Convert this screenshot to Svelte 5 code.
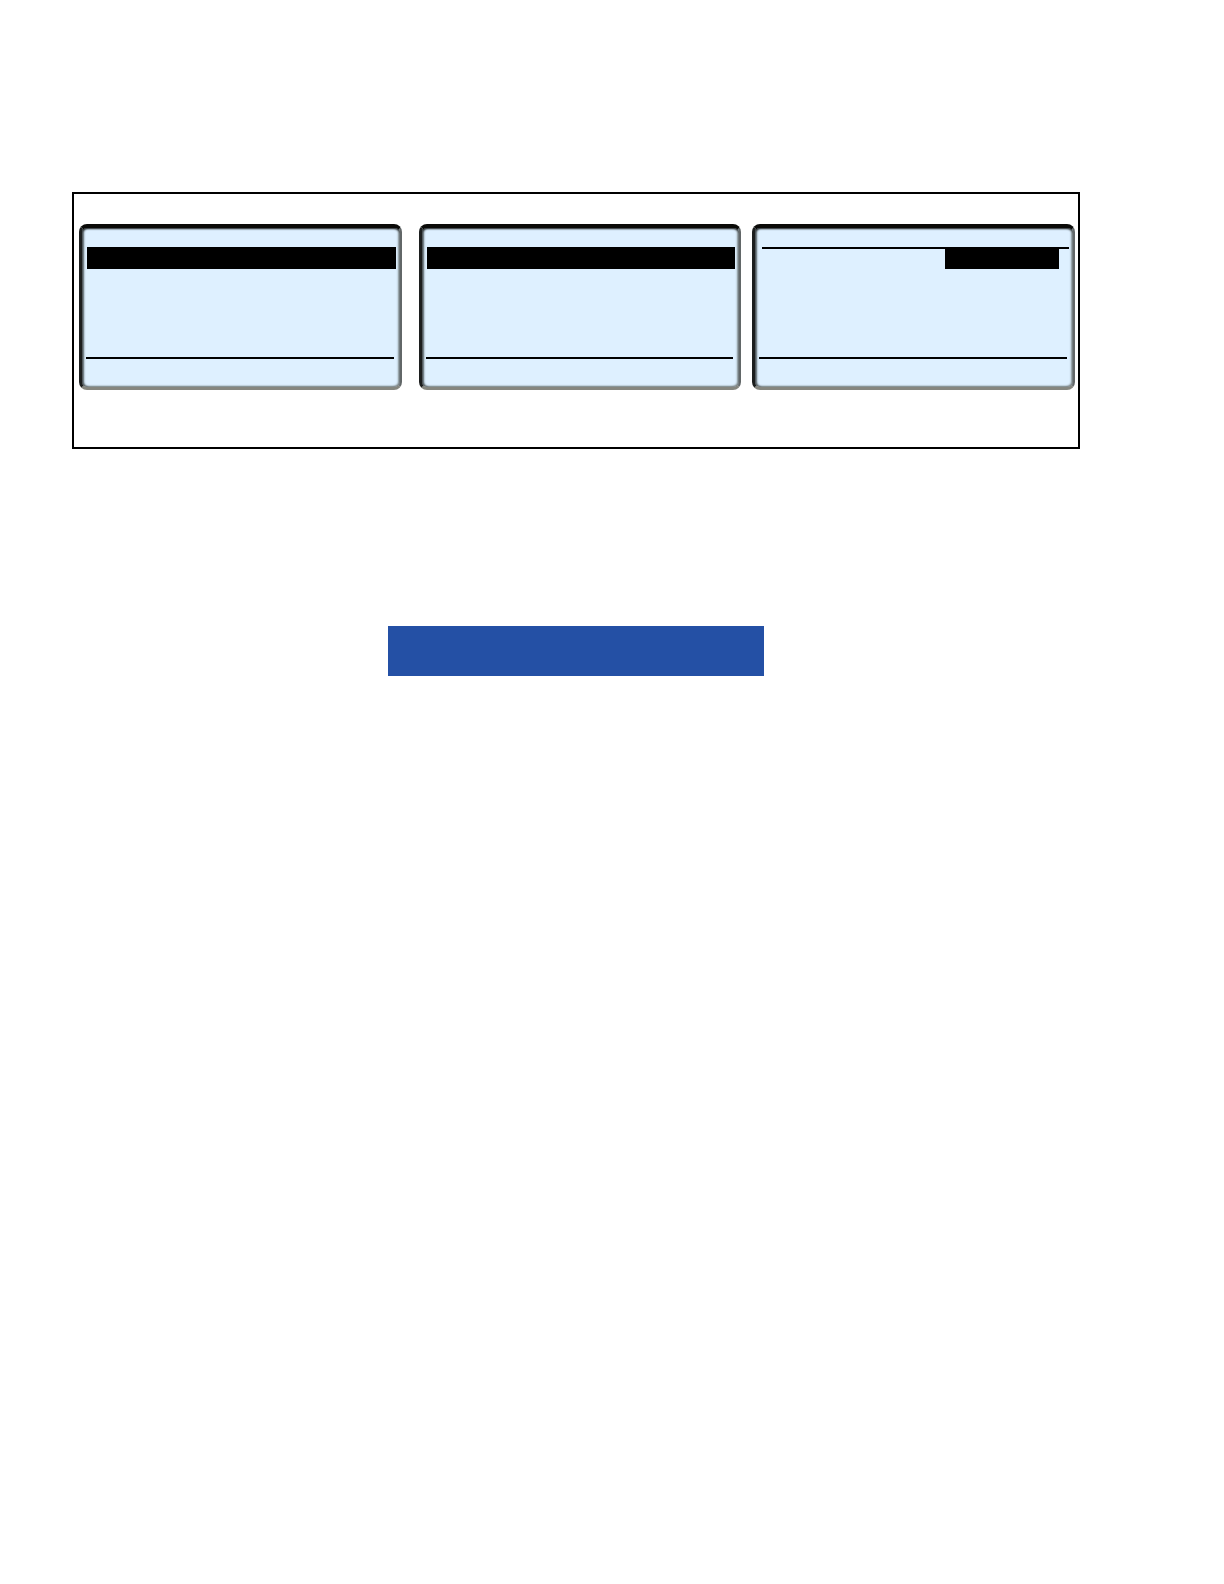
<script>
	// what each display shows, top to bottom
	const screens = [
		{ id: 'left', header: false, selection: 'full' },
		{ id: 'middle', header: false, selection: 'full' },
		{ id: 'right', header: true, selection: 'value' }
	];
</script>

<main class="page">
	<section class="frame">
		{#each screens as screen (screen.id)}
			<div class="lcd">
				{#if screen.header}
					<div class="rule header"></div>
				{/if}
				<div class="selection {screen.selection}"></div>
				<div class="rule footer"></div>
			</div>
		{/each}
	</section>

	<div class="banner"></div>
</main>

<style>
	:global(body) {
		margin: 0;
		background: #fff;
	}

	.page {
		box-sizing: border-box;
		min-height: 100vh;
		padding: 192px 144px 0 72px;
	}

	.frame {
		display: flex;
		gap: 11px;
		padding: 30px 3px 57px 5px;
		border: 2px solid #000;
	}

	/* Bevelled display: dark on top and left, lighter on the other sides */
	.lcd {
		box-sizing: border-box;
		display: flex;
		flex-direction: column;
		flex: 1;
		height: 166px;
		padding: 19px 4px 28px 5px;
		border-style: solid;
		border-width: 4px 2px 3px 3px;
		border-color: #0a0a08 #626768 #85867f #1c1e1e;
		border-radius: 8px;
		background: #def0ff;
		box-shadow:
			inset 0 1px 2px #24282a,
			inset 2px 0 2px #5d676c,
			inset -2px 0 2px #8f999d,
			inset 0 -1px 2px #99a2a5;
	}

	.lcd:first-child {
		margin-right: 6px;
	}

	.rule {
		height: 2px;
		background: #000;
	}

	.rule.header {
		margin-left: 2px;
	}

	.rule.footer {
		margin: auto 2px 0 -1px;
	}

	.selection {
		height: 22px;
		background: #000;
	}

	.selection.value {
		align-self: flex-end;
		width: 37%;
		height: 20px;
		margin-right: 10px;
	}

	.banner {
		width: 376px;
		max-width: 100%;
		height: 50px;
		margin: 177px auto 0;
		background: #2450a5;
	}
</style>
